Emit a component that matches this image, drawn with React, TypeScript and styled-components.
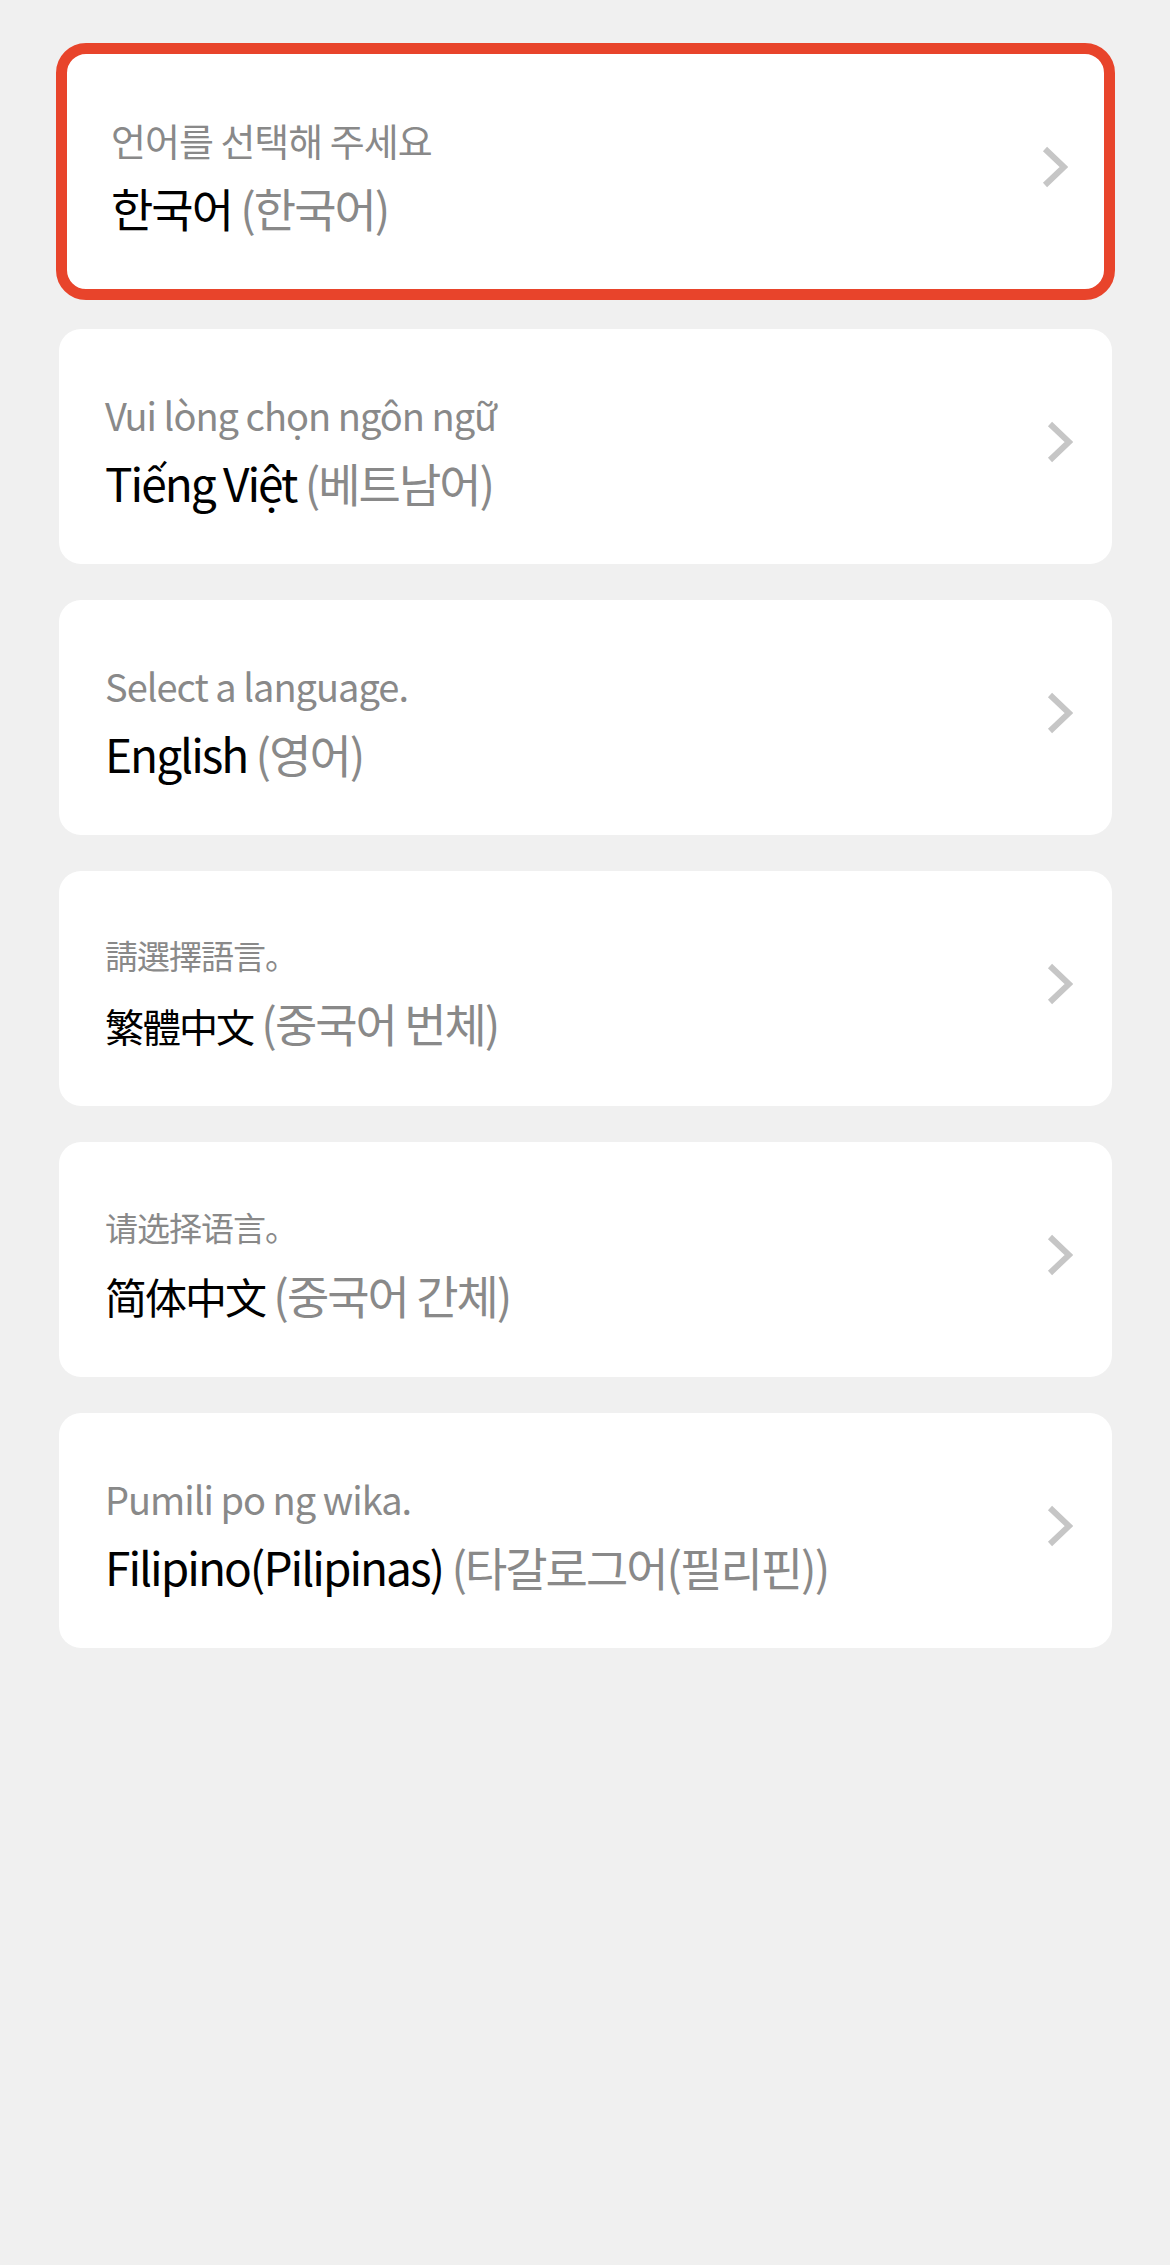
import React from "react";
import styled, { createGlobalStyle } from "styled-components";

const GlobalStyle = createGlobalStyle`
  html, body {
    margin: 0;
    padding: 0;
    background: #f0f0f0;
  }
  body {
    font-family: "Noto Sans CJK KR", "Noto Sans", sans-serif;
  }
`;

interface CardProps {
  $highlighted?: boolean;
}

interface TextProps {
  $font?: string;
  $size?: number;
}

const Page = styled.div`
  min-height: 2265px;
  box-sizing: border-box;
  padding: 43px 58px 0 59px;
  background: #f0f0f0;
`;

const List = styled.div`
  display: flex;
  flex-direction: column;
  gap: 36px;
`;

const Card = styled.button<CardProps>`
  display: flex;
  align-items: center;
  box-sizing: border-box;
  width: ${(p) => (p.$highlighted ? "calc(100% + 6px)" : "100%")};
  height: ${(p) => (p.$highlighted ? "257px" : "235px")};
  margin: ${(p) => (p.$highlighted ? "0 -3px -7px" : "0")};
  padding: ${(p) => (p.$highlighted ? "0 36px 0 44px" : "0 39px 0 46px")};
  border: ${(p) => (p.$highlighted ? "11px solid #e8442b" : "none")};
  border-radius: ${(p) => (p.$highlighted ? "30px" : "22px")};
  background: #fff;
  text-align: left;
  cursor: pointer;
  font: inherit;
`;

const TextBlock = styled.div`
  flex: 1;
  display: flex;
  flex-direction: column;
  padding-top: 8px;
  min-width: 0;
`;

const Prompt = styled.div<TextProps>`
  font-family: ${(p) => p.$font || `"Noto Sans CJK KR"`}, sans-serif;
  font-size: ${(p) => p.$size || 38}px;
  line-height: 50px;
  color: #898989;
  letter-spacing: -1px;
  white-space: nowrap;
`;

const Name = styled.div`
  margin-top: 12px;
  font-size: 46px;
  line-height: 60px;
  letter-spacing: -2px;
  white-space: nowrap;
`;

const Native = styled.span<TextProps>`
  font-family: ${(p) => p.$font || `"Noto Sans CJK KR"`}, sans-serif;
  font-size: ${(p) => p.$size || 46}px;
  color: #000;
`;

const Korean = styled.span`
  font-family: "Noto Sans CJK KR", sans-serif;
  color: #898989;
`;

const Chevron = styled.svg`
  flex-shrink: 0;
  width: 26px;
  height: 42px;
  margin-bottom: 9px;
`;

const ChevronIcon = () => (
  <Chevron viewBox="0 0 26 42">
    <polyline
      points="3,3 22,21 3,39"
      fill="none"
      stroke="#c6c6c6"
      strokeWidth="6"
      strokeLinejoin="miter"
    />
  </Chevron>
);

interface Language {
  prompt: string;
  name: string;
  korean: string;
  font?: string;
  promptSize?: number;
  nameSize?: number;
}

const languages: Language[] = [
  {
    prompt: "언어를 선택해 주세요",
    name: "한국어",
    korean: "(한국어)",
  },
  {
    prompt: "Vui lòng chọn ngôn ngữ",
    name: "Tiếng Việt",
    korean: "(베트남어)",
  },
  {
    prompt: "Select a language.",
    name: "English",
    korean: "(영어)",
  },
  {
    prompt: "請選擇語言。",
    name: "繁體中文",
    korean: "(중국어 번체)",
    font: `"Noto Sans CJK KR"`,
    promptSize: 33,
    nameSize: 39,
  },
  {
    prompt: "请选择语言。",
    name: "简体中文",
    korean: "(중국어 간체)",
    font: `"Noto Sans CJK SC"`,
    promptSize: 33,
    nameSize: 42,
  },
  {
    prompt: "Pumili po ng wika.",
    name: "Filipino(Pilipinas)",
    korean: "(타갈로그어(필리핀))",
  },
];

function App() {
  const [selected, setSelected] = React.useState(0);

  return (
    <Page>
      <GlobalStyle />
      <List>
        {languages.map((lang, i) => (
          <Card
            key={lang.name}
            $highlighted={i === selected}
            onClick={() => setSelected(i)}
          >
            <TextBlock>
              <Prompt $font={lang.font} $size={lang.promptSize}>
                {lang.prompt}
              </Prompt>
              <Name>
                <Native $font={lang.font} $size={lang.nameSize}>
                  {lang.name}
                </Native>{" "}
                <Korean>{lang.korean}</Korean>
              </Name>
            </TextBlock>
            <ChevronIcon />
          </Card>
        ))}
      </List>
    </Page>
  );
}

export default App;
